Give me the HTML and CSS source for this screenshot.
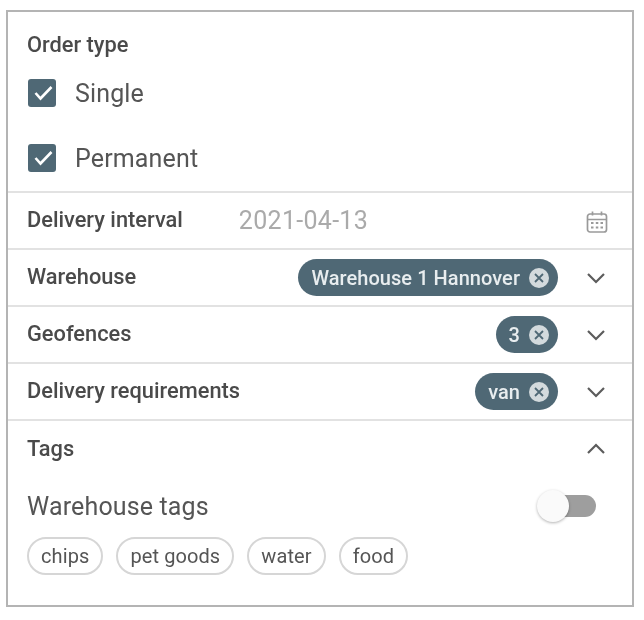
FILE: index.html
```html
<!DOCTYPE html>
<html lang="en">
<head>
<meta charset="utf-8">
<title>Filters</title>
<link rel="stylesheet" href="styles.css">
</head>
<body>
<main class="card">
  <section class="order">
    <div class="label">Order type</div>
    <label class="check"><span class="box"><svg viewBox="0 0 28 28" width="28" height="28"><path d="M7.500 14l5 5.500L23.500 8" fill="none" stroke="#fff" stroke-width="2.600"/></svg></span>Single</label>
    <label class="check"><span class="box"><svg viewBox="0 0 28 28" width="28" height="28"><path d="M7.500 14l5 5.500L23.500 8" fill="none" stroke="#fff" stroke-width="2.600"/></svg></span>Permanent</label>
  </section>
  <section class="row">
    <div class="label">Delivery interval</div>
    <div class="date">2021-04-13</div>
    <svg class="cal" viewBox="0 0 24 24" width="24" height="24" fill="none" stroke="#9a9a9a" stroke-width="1.700"><rect x="2.500" y="4" width="19" height="18" rx="2.500"/><path d="M2.500 9.500h19M7.500 1.500v4M16.500 1.500v4"/><path d="M6 13h2.500M10.800 13h2.500M15.500 13h2.500M6 17.500h2.500M10.800 17.500h2.500M15.500 17.500h2.500" stroke-width="2"/></svg>
  </section>
  <section class="row">
    <div class="label">Warehouse</div>
    <div class="chip">Warehouse 1 Hannover<svg class="x" viewBox="0 0 20 20" width="20" height="20"><circle cx="10" cy="10" r="10" fill="#d3dadd"/><path d="M6 6l8 8M14 6l-8 8" stroke="#4f6875" stroke-width="1.800"/></svg></div>
    <svg class="chev" viewBox="0 0 20 12" width="20" height="12"><path d="M2 2l8 8 8-8" fill="none" stroke="#5c5c5c" stroke-width="2.200"/></svg>
  </section>
  <section class="row">
    <div class="label">Geofences</div>
    <div class="chip">3<svg class="x" viewBox="0 0 20 20" width="20" height="20"><circle cx="10" cy="10" r="10" fill="#d3dadd"/><path d="M6 6l8 8M14 6l-8 8" stroke="#4f6875" stroke-width="1.800"/></svg></div>
    <svg class="chev" viewBox="0 0 20 12" width="20" height="12"><path d="M2 2l8 8 8-8" fill="none" stroke="#5c5c5c" stroke-width="2.200"/></svg>
  </section>
  <section class="row">
    <div class="label">Delivery requirements</div>
    <div class="chip">van<svg class="x" viewBox="0 0 20 20" width="20" height="20"><circle cx="10" cy="10" r="10" fill="#d3dadd"/><path d="M6 6l8 8M14 6l-8 8" stroke="#4f6875" stroke-width="1.800"/></svg></div>
    <svg class="chev" viewBox="0 0 20 12" width="20" height="12"><path d="M2 2l8 8 8-8" fill="none" stroke="#5c5c5c" stroke-width="2.200"/></svg>
  </section>
  <section class="tags">
    <div class="tags-head">
      <div class="label">Tags</div>
      <svg class="chev" viewBox="0 0 20 12" width="20" height="12"><path d="M2 10l8-8 8 8" fill="none" stroke="#5c5c5c" stroke-width="2.200"/></svg>
    </div>
    <div class="wh">
      <span class="wh-label">Warehouse tags</span>
      <span class="switch"><span class="knob"></span></span>
    </div>
    <div class="pills">
      <span class="pill">chips</span>
      <span class="pill">pet goods</span>
      <span class="pill">water</span>
      <span class="pill">food</span>
    </div>
  </section>
</main>
</body>
</html>
```

FILE: styles.css
```css
* { box-sizing: border-box; }
html, body { margin: 0; background: #fff; }
body { font-family: Roboto, "Liberation Sans", sans-serif; color: #444; }
.card {
  width: 628px;
  height: 597px;
  margin: 10px 0 0 6px;
  border: 2px solid #b4b4b4;
  display: flex;
  flex-direction: column;
  filter: blur(0.5px);
}
.label { font-size: 21.8px; font-weight: 500; color: #4a4a4a; line-height: 24px; }
.order { height: 181px; padding: 21px 19px 0; border-bottom: 2px solid #e2e2e2; }
.order .label { margin-bottom: 22px; }
.check { display: flex; align-items: center; height: 28px; font-size: 25px; letter-spacing: .15px; color: #555; margin-left: 1px; }
.check + .check { margin-top: 37px; }
.box { width: 28px; height: 28px; border-radius: 3px; background: #4f6875; margin-right: 19px; display: block; }
.box svg { display: block; }
.row {
  height: 57px;
  display: flex;
  align-items: center;
  padding: 0 26px 0 19px;
  border-bottom: 2px solid #e2e2e2;
}
.row .label { margin-bottom: 1px; }
.date { margin-left: 56px; flex: 1; font-size: 25px; letter-spacing: .3px; color: #aaa; }
.cal { margin: 2px -3px 0 0; }
.chip {
  margin-left: auto;
  height: 37px;
  border-radius: 19px;
  background: #4f6875;
  color: #e8edef;
  font-size: 20px;
  font-weight: 500;
  letter-spacing: .05px;
  display: flex;
  align-items: center;
  padding: 0 9px 0 13px;
}
.x { margin-left: 9px; }
.chev { margin-left: 28px; }
.tags { flex: 1; padding: 16px 26px 0 19px; }
.tags-head { display: flex; justify-content: space-between; align-items: center; }
.wh { display: flex; justify-content: space-between; align-items: center; margin-top: 27px; height: 36px; }
.wh-label { font-size: 25px; letter-spacing: .15px; color: #555; }
.switch { position: relative; width: 51px; height: 22px; border-radius: 11px; background: #9e9e9e; margin-right: 10px; display: block; }
.knob { position: absolute; left: -8px; top: -5px; width: 32px; height: 32px; border-radius: 50%; background: #fafafa; box-shadow: 0 1px 3px rgba(0,0,0,.3); }
.pills { display: flex; gap: 13px; margin-top: 13px; }
.pill { height: 38px; padding: 0 12px; border: 2px solid #d6d6d6; border-radius: 19px; font-size: 20px; letter-spacing: .1px; color: #555; display: flex; align-items: center; }
```
